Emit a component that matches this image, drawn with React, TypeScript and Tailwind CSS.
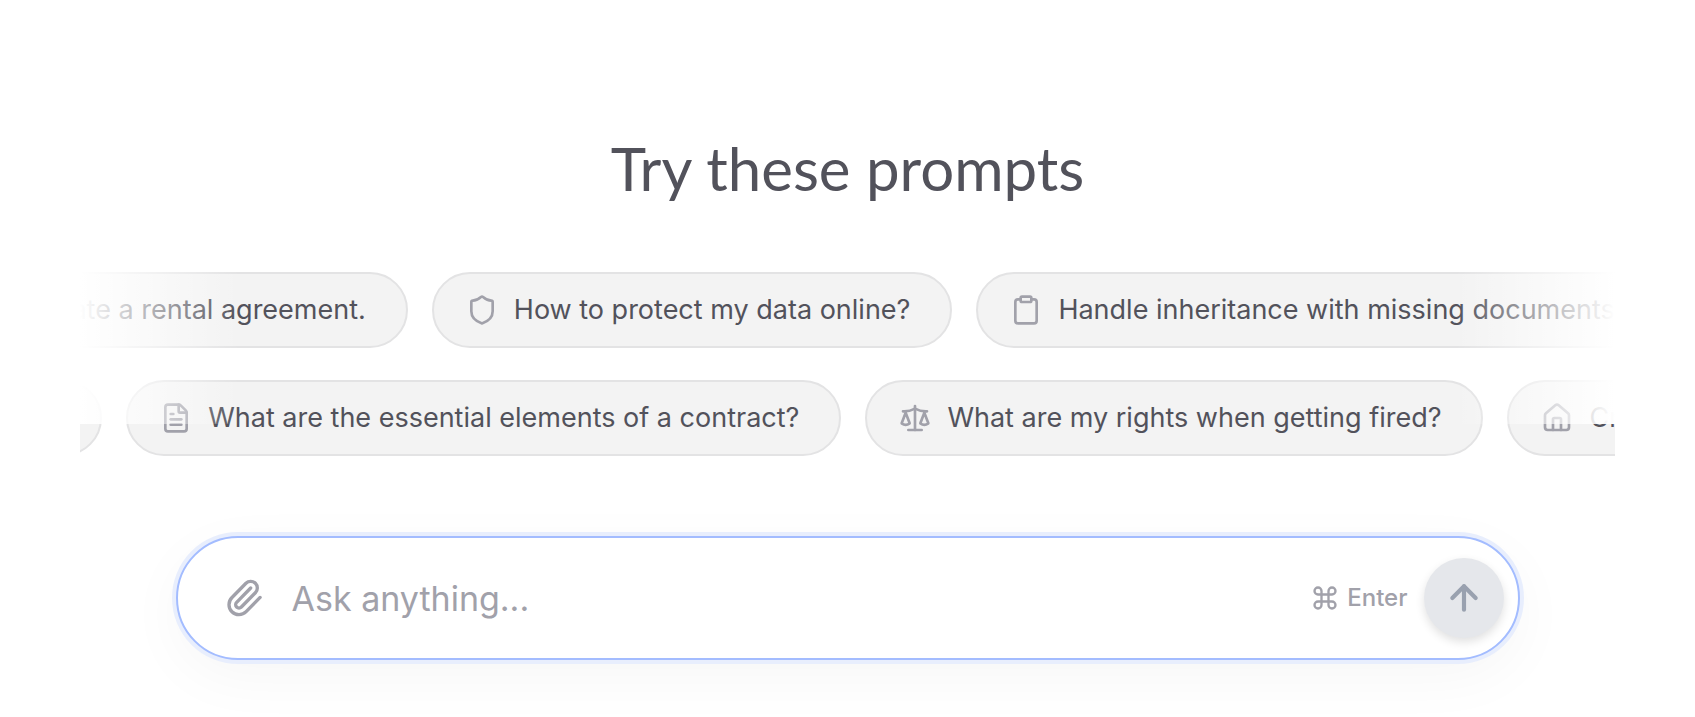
import { ArrowUp, Clipboard, Command, FileText, House, Paperclip, Scale, Shield, type LucideIcon } from 'lucide-react';

interface Prompt {
  icon: LucideIcon;
  label: string;
}

const RENTAL: Prompt = { icon: House, label: 'Create a rental agreement.' };
const DATA: Prompt = { icon: Shield, label: 'How to protect my data online?' };
const INHERITANCE: Prompt = { icon: Clipboard, label: 'Handle inheritance with missing documents.' };
const CONTRACT: Prompt = { icon: FileText, label: 'What are the essential elements of a contract?' };
const FIRED: Prompt = { icon: Scale, label: 'What are my rights when getting fired?' };

function PromptPill({ icon: Icon, label }: Prompt) {
  return (
    <button
      type="button"
      className="flex h-19 shrink-0 items-center gap-4 rounded-full border-2 border-[#e3e3e4] bg-[#f3f3f3] pr-10 pl-8 text-[27px] whitespace-nowrap text-[#52525b]"
    >
      <Icon size={32} className="shrink-0 text-[#a1a1aa]" />
      {label}
    </button>
  );
}

function PromptRow({ prompts, className }: { prompts: Prompt[]; className: string }) {
  return (
    <div className={`flex gap-6 ${className}`}>
      {prompts.map((prompt) => (
        <PromptPill key={prompt.label} {...prompt} />
      ))}
    </div>
  );
}

export default function App() {
  return (
    <main className="flex min-h-screen flex-col items-center overflow-hidden bg-white px-20 pt-33 font-['Inter',sans-serif]">
      <h1 className="font-['Lato',sans-serif] text-[60px] leading-[72px] font-normal text-[#52525b]">
        Try these prompts
      </h1>

      <section aria-label="Suggested prompts" className="relative mt-17 flex w-full max-w-[1536px] flex-col gap-8 overflow-hidden">
        <PromptRow prompts={[RENTAL, DATA, INHERITANCE]} className="-ml-[136px]" />
        <PromptRow prompts={[INHERITANCE, CONTRACT, FIRED, RENTAL]} className="-ml-[666px]" />
        {/* edge fades */}
        <div className="pointer-events-none absolute top-0 left-0 h-38 w-40 bg-linear-to-r from-white to-transparent" />
        <div className="pointer-events-none absolute top-0 right-0 h-38 w-40 bg-linear-to-l from-white to-transparent" />
      </section>

      <form
        onSubmit={(e) => e.preventDefault()}
        className="mt-20 flex h-31 w-full max-w-[1344px] items-center rounded-full border-2 border-[#a3bcff] bg-white pr-3.5 pl-[46px] shadow-[0_0_0_4px_#e8eefd,0_16px_60px_rgba(0,0,0,0.04)]"
      >
        <button type="button" aria-label="Attach a file" className="text-[#a1a1aa]">
          <Paperclip size={40} />
        </button>
        <input
          type="text"
          aria-label="Ask anything"
          placeholder="Ask anything..."
          className="ml-7 min-w-0 flex-1 bg-transparent text-[34px] text-[#52525b] outline-none placeholder:text-[#a1a1aa]"
        />
        <span className="flex items-center gap-2 text-2xl font-medium text-[#a1a1aa]">
          <Command size={28} />
          Enter
        </span>
        <button
          type="submit"
          aria-label="Send"
          className="ml-4 flex size-20 items-center justify-center rounded-full bg-[#e5e7eb] text-[#99a1af] shadow-[0_4px_10px_rgba(0,0,0,0.12)]"
        >
          <ArrowUp size={40} strokeWidth={2.5} />
        </button>
      </form>
    </main>
  );
}
